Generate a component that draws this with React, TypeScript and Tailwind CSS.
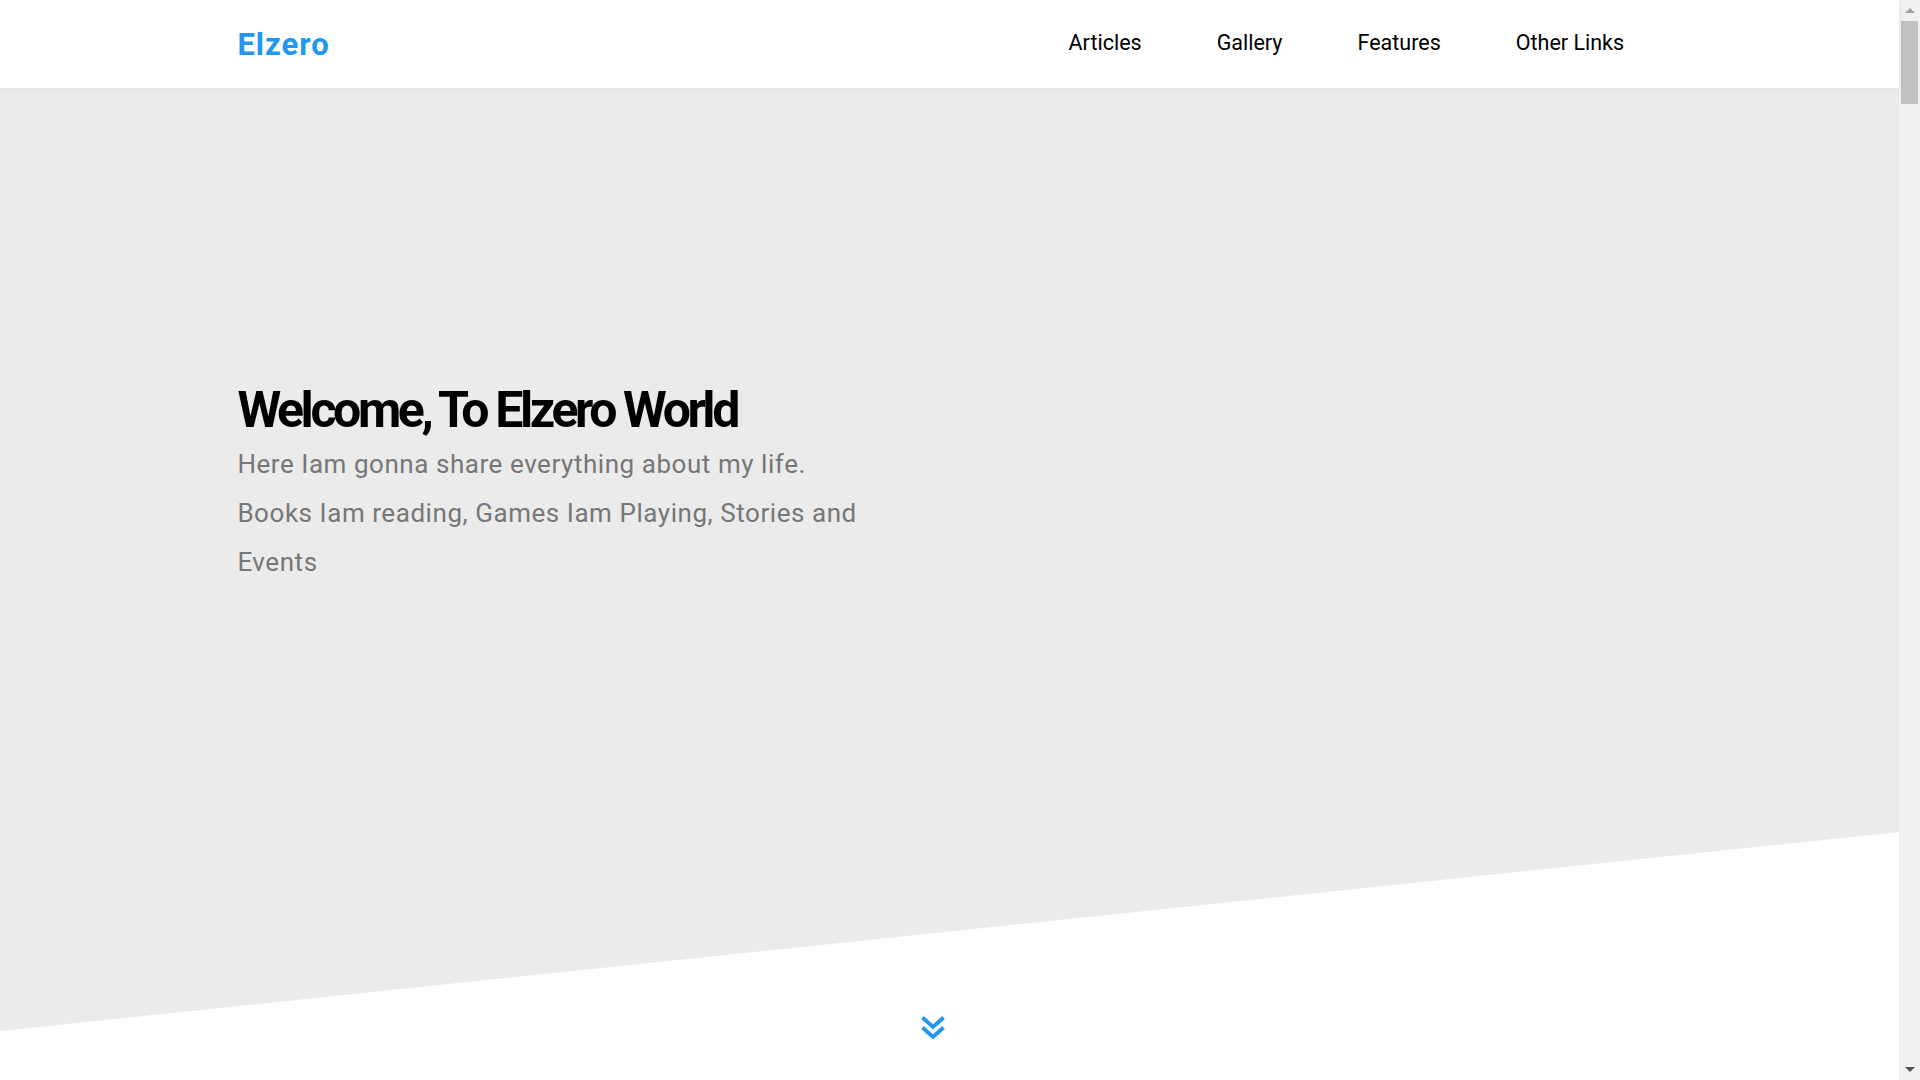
const links = ["Articles", "Gallery", "Features", "Other Links"];

function DoubleDown() {
    return (
        <svg width="24" height="26" viewBox="0 0 24 26" fill="none">
            <path d="M1.5 2.5 L12 12 L22.5 2.5" stroke="#2196f3" strokeWidth="3.8" />
            <path d="M1.5 12.5 L12 22 L22.5 12.5" stroke="#2196f3" strokeWidth="3.8" />
        </svg>
    );
}

function Scrollbar() {
    return (
        <div className="w-[21px] h-full bg-[#f1f1f1] flex flex-col items-center">
            <div className="h-[21px] flex items-center justify-center">
                <div className="w-0 h-0 border-x-[5px] border-x-transparent border-b-[5px] border-b-[#a3a3a3]" />
            </div>
            <div className="w-[17px] h-[83px] bg-[#c1c1c1]" />
            <div className="flex-1" />
            <div className="h-[21px] flex items-center justify-center">
                <div className="w-0 h-0 border-x-[5px] border-x-transparent border-t-[5px] border-t-[#505050]" />
            </div>
        </div>
    );
}

export default function App() {
    return (
        <div className="h-screen flex overflow-hidden bg-white font-['Roboto',sans-serif]">
            <main className="flex-1 min-w-0">

                {/* HEADER */}
                <header className="relative z-10 h-[88px] bg-white shadow-[0_0_8px_rgba(0,0,0,0.06)]">
                    <div className="w-3/4 mx-auto h-full flex items-center justify-between">
                        <a className="text-[31px] leading-[1.5] font-bold tracking-[1px] text-[#2196f3] mt-[2px]">
                            Elzero
                        </a>

                        <ul className="flex items-center mb-[2px]">
                            {links.map((link) => (
                                <li key={link}>
                                    <a className="block px-[37.5px] text-[21.5px] leading-[1.5] text-black">
                                        {link}
                                    </a>
                                </li>
                            ))}
                        </ul>
                    </div>
                </header>

                {/* HERO */}
                <div className="relative">
                    <section className="h-[943px] bg-[#ebebeb] [clip-path:polygon(0_0,100%_0,100%_78.9%,0_100%)]">
                        <div className="w-3/4 mx-auto pt-[292px]">
                            <h1 className="text-[50px] leading-[60px] font-bold tracking-[-3.4px] text-black">
                                Welcome, To Elzero World
                            </h1>
                            <p className="max-w-[640px] text-[26px] leading-[49px] tracking-[0.55px] text-[#777]">
                                Here Iam gonna share everything about my life. Books Iam
                                reading, Games Iam Playing, Stories and Events
                            </p>
                        </div>
                    </section>

                    <a className="absolute left-1/2 -ml-[29px] bottom-[-10px]">
                        <DoubleDown />
                    </a>
                </div>
            </main>

            <Scrollbar />
        </div>
    );
}
